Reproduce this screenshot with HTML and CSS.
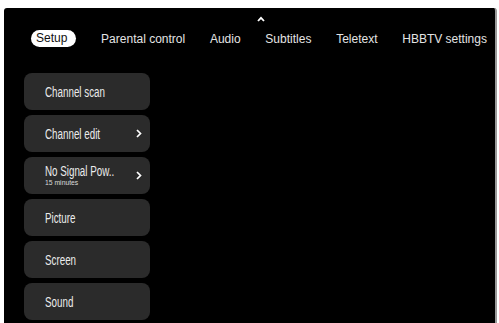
FILE: index.html
```html
<!DOCTYPE html>
<html lang="en">
<head>
  <meta charset="UTF-8" />
  <meta name="viewport" content="width=device-width, initial-scale=1.0"/>
  <title>TV Settings</title>
  <link rel="stylesheet" href="styles.css">
</head>
<body>
  <div class="screen">
    <div class="up-arrow">
      <svg width="8" height="6" viewBox="0 0 8 6"><polyline points="1,5 4,1.8 7,5" fill="none" stroke="#fff" stroke-width="1.8"/></svg>
    </div>

    <nav class="tabs">
      <span class="tab active">Setup</span>
      <span class="tab">Parental control</span>
      <span class="tab">Audio</span>
      <span class="tab">Subtitles</span>
      <span class="tab">Teletext</span>
      <span class="tab">HBBTV settings</span>
    </nav>

    <ul class="menu">
      <li class="item"><span class="label">Channel scan</span></li>
      <li class="item">
        <span class="label">Channel edit</span>
        <svg class="chev" width="6" height="9" viewBox="0 0 6 9"><polyline points="1,1 4.5,4.5 1,8" fill="none" stroke="#fff" stroke-width="1.7"/></svg>
      </li>
      <li class="item">
        <span class="label-group">
          <span class="label">No Signal Pow..</span>
          <span class="sub">15 minutes</span>
        </span>
        <svg class="chev" width="6" height="9" viewBox="0 0 6 9"><polyline points="1,1 4.5,4.5 1,8" fill="none" stroke="#fff" stroke-width="1.7"/></svg>
      </li>
      <li class="item"><span class="label">Picture</span></li>
      <li class="item"><span class="label">Screen</span></li>
      <li class="item"><span class="label">Sound</span></li>
    </ul>
  </div>
</body>
</html>
```

FILE: styles.css
```css
body {
  margin: 0;
  background: #fff;
  font-family: "Liberation Sans", Arial, sans-serif;
}

.screen {
  margin: 8px 0 0 4px;
  width: 493px;
  height: 315px;
  background: #000;
  border-radius: 3px 3px 0 0;
  border-right: 2px solid #9a9a9a;
  box-sizing: border-box;
  overflow: hidden;
}

.up-arrow {
  height: 14px;
  padding: 7px 0 0 253px;
  box-sizing: border-box;
  display: flex;
  align-items: center;
}

.tabs {
  display: flex;
  justify-content: space-between;
  align-items: center;
  padding: 8px 8px 0 27px;
  height: 17px;
}

.tab {
  color: #e4e4e4;
  font-size: 12px;
  white-space: nowrap;
}

.tab.active {
  background: #fff;
  color: #111;
  border-radius: 9px;
  padding: 2px 9px 2px 5px;
  line-height: 13px;
}

.menu {
  list-style: none;
  margin: 0;
  padding: 26px 0 0 20px;
  display: flex;
  flex-direction: column;
  gap: 5px;
}

.item {
  width: 126px;
  height: 37px;
  background: #2b2b2b;
  border-radius: 8px;
  display: flex;
  align-items: center;
  justify-content: space-between;
  padding: 0 8px 0 21px;
  box-sizing: border-box;
}

.label {
  display: inline-block;
  color: #ececec;
  font-size: 14px;
  white-space: nowrap;
  transform: scaleX(0.7);
  transform-origin: left center;
}

.label-group {
  flex: 1;
  min-width: 0;
  display: flex;
  flex-direction: column;
  align-items: flex-start;
}

.label-group .label {
  line-height: 14px;
}

.sub {
  display: inline-block;
  color: #dcdcdc;
  font-size: 8px;
  line-height: 9px;
  white-space: nowrap;
  transform: scaleX(0.85);
  transform-origin: left center;
}

.chev {
  display: block;
  flex-shrink: 0;
}
```
